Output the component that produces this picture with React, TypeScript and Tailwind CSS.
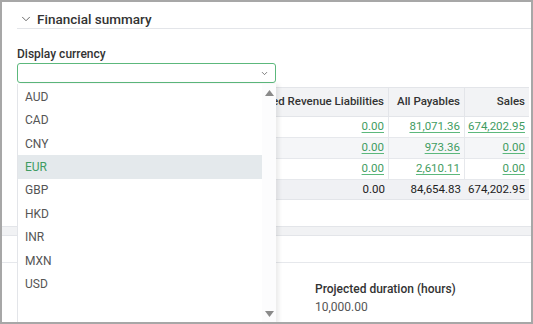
import { ChevronDown } from 'lucide-react';

const currencies = ['AUD', 'CAD', 'CNY', 'EUR', 'GBP', 'HKD', 'INR', 'MXN', 'USD'];

const rows = [
    { id: 1, deferred: '0.00', payables: '81,071.36', sales: '674,202.95', striped: false },
    { id: 2, deferred: '0.00', payables: '973.36', sales: '0.00', striped: true },
    { id: 3, deferred: '0.00', payables: '2,610.11', sales: '0.00', striped: false },
];

function Link({ children }: { children: string }) {
    return <span className="text-[#3f9c62] underline underline-offset-2 decoration-[#5cb87c]">{children}</span>;
}

export default function App() {
    return (
        <div className="relative w-[533px] h-[324px] overflow-hidden bg-white border-2 border-[#a7a7a7] font-['Roboto','Liberation_Sans',sans-serif] text-[#333]">
            {/* Section header */}
            <div className="ml-[15px] h-[27px] pt-[8px] flex items-start border-b border-[#e3e5e9]">
                <ChevronDown size={14} strokeWidth={1.5} className="mt-[2px] ml-[2px] text-[#555]" />
                <span className="ml-[4px] text-[13.5px] leading-[18px] font-medium text-[#333]">Financial summary</span>
            </div>

            <div className="pl-[15px] pr-[2px]">
                <div className="mt-[17px] text-[12px] leading-[16px] font-medium text-[#333]">Display currency</div>
                <div className="mt-[1px] w-[259px] h-[20px] border border-[#5cb87c] rounded-[3px] flex items-center justify-end pr-[6px]">
                    <ChevronDown size={9} strokeWidth={2} className="text-[#555]" />
                </div>

                {/* Table (left columns sit under the open list) */}
                <div className="mt-[4px] w-[512px] text-[11.5px] whitespace-nowrap">
                    <div className="grid grid-cols-[222px_150px_76px_64px] h-[30px] bg-[#f2f3f5] border-y border-[#e3e5e9] font-medium">
                        <div className="border-r border-[#e3e5e9]" />
                        <div className="flex items-center justify-end px-[4px] border-r border-[#e3e5e9]">Deferred Revenue Liabilities</div>
                        <div className="flex items-center justify-end px-[4px] border-r border-[#e3e5e9]">All Payables</div>
                        <div className="flex items-center justify-end px-[4px]">Sales</div>
                    </div>
                    {rows.map((r) => (
                        <div
                            key={r.id}
                            className={`grid grid-cols-[222px_150px_76px_64px] h-[21px] border-b border-[#e6e8ec] ${r.striped ? 'bg-[#f5f6f8]' : 'bg-white'}`}
                        >
                            <div className="border-r border-[#e6e8ec]" />
                            <div className="flex items-center justify-end px-[4px] border-r border-[#e6e8ec]"><Link>{r.deferred}</Link></div>
                            <div className="flex items-center justify-end px-[4px] border-r border-[#e6e8ec]"><Link>{r.payables}</Link></div>
                            <div className="flex items-center justify-end px-[4px]"><Link>{r.sales}</Link></div>
                        </div>
                    ))}
                    <div className="grid grid-cols-[222px_150px_76px_64px] h-[20px] bg-[#f0f1f4] border-b border-[#e3e5e9] text-[#222]">
                        <div />
                        <div className="flex items-center justify-end px-[4px]">0.00</div>
                        <div className="flex items-center justify-end px-[4px]">84,654.83</div>
                        <div className="flex items-center justify-end px-[4px]">674,202.95</div>
                    </div>
                </div>
            </div>

            {/* Section divider */}
            <div className="mt-[26px] h-[10px] bg-[#f1f2f4] border-y border-[#e3e5e9]" />
            <div className="h-[27px] border-b border-[#e6e8ec]" />

            <div className="pl-[313px] pt-[18px]">
                <div className="text-[12px] leading-[16px] font-medium text-[#333]">Projected duration (hours)</div>
                <div className="mt-[2px] text-[12px] leading-[16px] text-[#555]">10,000.00</div>
            </div>

            {/* Open dropdown list */}
            <div className="absolute left-[15px] top-[82px] w-[259px] h-[240px] bg-white border-l border-[#e3e5e9] shadow-[3px_0_4px_rgba(0,0,0,0.08)] flex">
                <div className="flex-1 pt-[1px]">
                    {currencies.map((c) => (
                        <div
                            key={c}
                            className={`h-[23.45px] flex items-center pl-[7px] text-[12px] ${c === 'EUR' ? 'bg-[#e4e9ec] text-[#3f9c62]' : 'text-[#555]'}`}
                        >
                            {c}
                        </div>
                    ))}
                </div>
                <div className="w-[14px] bg-[#fcfcfd] flex flex-col items-center justify-between pt-[6px] pb-[7px]">
                    <svg width="9" height="6" viewBox="0 0 9 6"><path d="M4.5 0L9 6H0z" fill="#8a8a8a" /></svg>
                    <svg width="9" height="6" viewBox="0 0 9 6"><path d="M0 0h9L4.5 6z" fill="#8a8a8a" /></svg>
                </div>
            </div>
        </div>
    );
}
